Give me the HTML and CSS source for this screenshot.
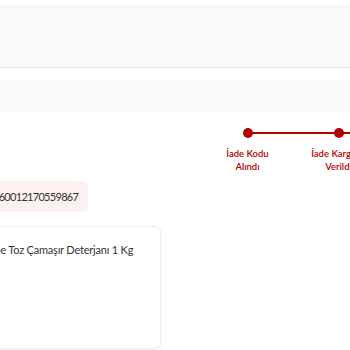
FILE: index.html
```html
<!DOCTYPE html>
<html lang="tr">
<head>
<meta charset="UTF-8">
<title>İade Takibi</title>
<link rel="stylesheet" href="styles.css">
</head>
<body>
<div class="band band-top"></div>
<div class="band band-sub"></div>

<div class="tracker">
	<div class="step done">
		<span class="dot"></span>
		<span class="label">İade Kodu<br>Alındı</span>
	</div>
	<div class="step done">
		<span class="dot"></span>
		<span class="label">İade Kargoya<br>Verildi</span>
	</div>
</div>

<div class="code-row">
	<span class="code">260012170559867</span>
</div>

<div class="product-card">
	<div class="product-name">Bebe Toz Çamaşır Deterjanı 1 Kg</div>
</div>
</body>
</html>
```

FILE: styles.css
```css
*{
	margin: 0;
	padding: 0;
	box-sizing: border-box;
}
html,body{
	width: 100%;
	height: 100%;
	overflow: hidden;
}
body{
	background: #fff;
	font-family: Lato, "Noto Sans", sans-serif;
	color: #333;
}

.band{
	background: #f9f9f9;
}
.band-top{
	margin-top: 6px;
	height: 62px;
	border-top: 1px solid #f2f2f2;
	border-bottom: 1px solid #e6e6e6;
}
.band-sub{
	margin-top: 12px;
	height: 32px;
}

/* takip adimlari */
.tracker{
	display: flex;
	justify-content: flex-end;
	margin-right: -34px;
	padding-top: 16px;
}
.step{
	position: relative;
	width: 91px;
	display: flex;
	flex-direction: column;
	align-items: center;
}
.step::after{
	content: "";
	position: absolute;
	top: 4px;
	left: 50%;
	width: 100%;
	height: 2px;
	background: #b30000;
}
.dot{
	position: relative;
	z-index: 1;
	width: 10px;
	height: 10px;
	border-radius: 50%;
	background: #b30000;
}
.label{
	margin-top: 9px;
	font-size: 9.5px;
	font-weight: 600;
	line-height: 13px;
	text-align: center;
	color: #b30000;
	white-space: nowrap;
}

.code-row{
	margin-top: 8px;
	margin-left: -7px;
}
.code{
	display: inline-block;
	padding: 0 10px 0 0;
	height: 31px;
	line-height: 31px;
	background: #fdf0f0;
	border-radius: 5px;
	font-size: 11px;
	letter-spacing: -0.7px;
	color: #333;
}

.product-card{
	margin-top: 14px;
	margin-left: -30px;
	width: 191px;
	height: 123px;
	border: 1px solid #eee;
	border-radius: 6px;
	box-shadow: 0 1px 3px rgba(0,0,0,0.05);
	padding: 16px 0 0 0;
	overflow: hidden;
}
.product-name{
	margin-left: 11px;
	font-size: 11px;
	line-height: 14px;
	letter-spacing: -0.2px;
	white-space: nowrap;
	color: #333;
}
```
